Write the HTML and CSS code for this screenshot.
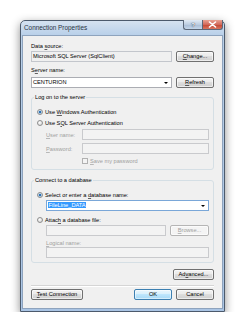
FILE: index.html
```html
<!DOCTYPE html>
<html lang="en">
<head>
	<meta charset="UTF-8">
	<title>Connection Properties</title>
	<link rel="stylesheet" href="styles.css">
</head>
<body>
	<div class="window">
		<div class="titlebar">
			<span class="title">Connection Properties</span>
			<div class="caption">
				<span class="cap help">?</span>
				<span class="cap close">
					<svg width="9" height="7" viewBox="0 0 9 7"><path d="M1.5 1 L7.5 6 M7.5 1 L1.5 6" stroke="#fff" stroke-width="1.6" stroke-linecap="round"/></svg>
				</span>
			</div>
		</div>
		<div class="client">
			<div class="label">Data <u>s</u>ource:</div>
			<div class="row">
				<div class="field readonly grow">Microsoft SQL Server (SqlClient)</div>
				<button class="btn w38"><u>C</u>hange...</button>
			</div>

			<div class="label server">S<u>e</u>rver name:</div>
			<div class="row">
				<div class="field combo grow">CENTURION<span class="arrow"></span></div>
				<button class="btn w38"><u>R</u>efresh</button>
			</div>

			<fieldset class="group logon">
				<legend>Log on to the server</legend>
				<div class="option"><span class="radio checked"></span><span>Use <u>W</u>indows Authentication</span></div>
				<div class="option"><span class="radio"></span><span>Use S<u>Q</u>L Server Authentication</span></div>
				<div class="cred user">
					<span class="cred-label disabled"><u>U</u>ser name:</span>
					<div class="field disabled grow"></div>
				</div>
				<div class="cred pass">
					<span class="cred-label disabled"><u>P</u>assword:</span>
					<div class="field disabled grow"></div>
				</div>
				<div class="save disabled"><span class="check"></span><span><u>S</u>ave my password</span></div>
			</fieldset>

			<fieldset class="group database">
				<legend>Connect to a database</legend>
				<div class="option"><span class="radio checked"></span><span>Select or enter a <u>d</u>atabase name:</span></div>
				<div class="sub">
					<div class="field combo focus"><span class="sel">FileLine_DATA</span><span class="arrow"></span></div>
				</div>
				<div class="option attach"><span class="radio"></span><span>Attac<u>h</u> a database file:</span></div>
				<div class="sub row0">
					<div class="field disabled grow"></div>
					<button class="btn disabled w39"><u>B</u>rowse...</button>
				</div>
				<div class="sub label logical disabled"><u>L</u>ogical name:</div>
				<div class="sub">
					<div class="field disabled"></div>
				</div>
			</fieldset>

			<div class="advanced">
				<button class="btn w41">Ad<u>v</u>anced...</button>
			</div>

			<div class="separator"></div>

			<div class="footer">
				<button class="btn w52"><u>T</u>est Connection</button>
				<span class="spacer"></span>
				<button class="btn default w38">OK</button>
				<button class="btn w38">Cancel</button>
			</div>
		</div>
	</div>
</body>
</html>
```

FILE: styles.css
```css
/* base */
* {
	box-sizing: border-box;
}

body {
	margin: 0;
	background: #fff;
	font-family: "Liberation Sans", Arial, sans-serif;
	font-size: 5.65px;
	color: #000;
}

u {
	text-decoration-thickness: 0.4px;
	text-decoration-color: rgba(0, 0, 0, 0.6);
	text-underline-offset: 1px;
}

.disabled u {
	text-decoration-color: rgba(160, 160, 160, 0.7);
}

/* window frame */
.window {
	margin: 20px 0 0 20px;
	width: 205px;
	height: 292px;
	border: 1px solid #4c5a6c;
	border-radius: 5px 5px 0 0;
	background: linear-gradient(#d5e2f0, #b9d0e9 14px, #a9c4e4);
	padding: 0 1px 2px;
	box-shadow: 0 3px 10px rgba(0, 0, 0, 0.45);
	display: flex;
	flex-direction: column;
}

.titlebar {
	height: 14px;
	display: flex;
	align-items: flex-start;
}

.title {
	font-size: 6.4px;
	line-height: 14px;
	padding-left: 2px;
	color: #2a3442;
	flex: 1;
}

.caption {
	display: flex;
	margin-top: -1px;
}

.cap {
	height: 10px;
	display: flex;
	align-items: center;
	justify-content: center;
	border: 1px solid #5b6778;
	border-top: none;
}

.cap.help {
	width: 19px;
	border-right: none;
	border-radius: 0 0 0 3px;
	background: linear-gradient(#e2ebf5, #bccde1 50%, #a9bdd6 51%, #c4d6ea);
	color: #fff;
	font-weight: bold;
	font-size: 6px;
	text-shadow: 0 0 1px #2a3a52, 0 0 1px #2a3a52;
}

.cap.close {
	width: 21px;
	border-radius: 0 0 3px 0;
	background: linear-gradient(#e8a293, #d2695a 50%, #c24430 51%, #d8745f);
}

/* client area */
.client {
	flex: 1;
	background: #f0f0f0;
	border: 1px solid #8ea3bd;
	padding: 6px 8px 0 8px;
	display: flex;
	flex-direction: column;
}

.label {
	line-height: 8px;
	height: 8px;
	white-space: nowrap;
}

.label.server {
	margin-top: 4px;
}

.row {
	display: flex;
	gap: 4px;
	margin-top: 1px;
}

.row + .label.server + .row {
	margin-top: 3px;
}

.grow {
	flex: 1;
}

.field {
	height: 11px;
	border: 1px solid #abadb3;
	background: #fff;
	line-height: 9px;
	padding-left: 1px;
	white-space: nowrap;
	position: relative;
}

.field.readonly {
	background: #f0f0f0;
	border-color: #c3c6cc;
}

.field.disabled {
	background: #f3f3f3;
	border-color: #c9cacd;
}

.field.focus {
	border-color: #7aa7d8;
}

.arrow {
	position: absolute;
	right: 3px;
	top: 4px;
	border-left: 2px solid transparent;
	border-right: 2px solid transparent;
	border-top: 2px solid #000;
}

.sel {
	background: #3399ff;
	color: #fff;
	padding: 0 0.5px;
}

/* buttons */
.btn {
	height: 11px;
	padding: 0;
	margin: 0;
	font-family: inherit;
	font-size: 5.65px;
	line-height: 9px;
	color: #000;
	border: 1px solid #707070;
	border-radius: 2px;
	background: linear-gradient(#f2f2f2, #ebebeb 45%, #dddddd 50%, #cfcfcf);
	box-shadow: inset 0 0 0 1px rgba(255, 255, 255, 0.6);
	white-space: nowrap;
}

.btn.disabled {
	color: #a0a0a0;
	border-color: #b5b5b5;
	background: #f4f4f4;
}

.btn.default {
	border-color: #3c7fb1;
	background: linear-gradient(#eaf6fd, #d9f0fc 45%, #bee6fd 50%, #a7d9f5);
	box-shadow: inset 0 0 0 1px rgba(255, 255, 255, 0.5);
}

.w38 { width: 38px; }
.w39 { width: 39px; }
.w41 { width: 41px; }
.w52 { width: 52px; }

/* group boxes */
.group {
	margin: 5px 0 0;
	min-width: 0;
	border: 1px solid #d5dfe5;
	border-radius: 3px;
	padding: 5px 4px 3px 5px;
}

.group legend {
	line-height: 8px;
	padding: 0 1px;
	margin-left: -3px;
	white-space: nowrap;
}

.group.database {
	margin-top: 6px;
	padding-bottom: 4px;
}

.option {
	height: 11px;
	display: flex;
	align-items: center;
	white-space: nowrap;
}

.option.attach {
	margin-top: 3px;
}

.radio {
	width: 6px;
	height: 6px;
	border-radius: 50%;
	border: 1px solid #8e8f8f;
	background: radial-gradient(circle at 40% 35%, #fff, #dcdcdc 70%);
	margin-right: 2px;
	position: relative;
}

.radio.checked::after {
	content: "";
	position: absolute;
	left: 1px;
	top: 1px;
	width: 2px;
	height: 2px;
	border-radius: 50%;
	background: #1e5fa4;
	box-shadow: 0 0 0 0.5px #5fa6e0;
}

.cred {
	display: flex;
	align-items: center;
	padding-left: 9px;
	margin-top: 1px;
}

.cred.pass {
	margin-top: 3px;
}

.cred-label {
	width: 36px;
	white-space: nowrap;
}

.disabled {
	color: #a0a0a0;
}

.save {
	height: 10px;
	display: flex;
	align-items: center;
	padding-left: 45px;
	margin-top: 2px;
	white-space: nowrap;
}

.check {
	width: 6px;
	height: 6px;
	border: 1px solid #b1b1b1;
	background: #f4f4f4;
	margin-right: 2px;
}

.sub {
	padding-left: 9px;
}

.row0 {
	display: flex;
	gap: 4px;
}

.label.logical {
	margin-top: 3px;
}

/* bottom */
.advanced {
	display: flex;
	justify-content: flex-end;
	margin-top: 6px;
}

.separator {
	margin-top: 5px;
	border-top: 1px solid #d5d5d5;
	border-bottom: 1px solid #fff;
}

.footer {
	display: flex;
	gap: 4px;
	margin-top: 2px;
}

.spacer {
	flex: 1;
}
```
